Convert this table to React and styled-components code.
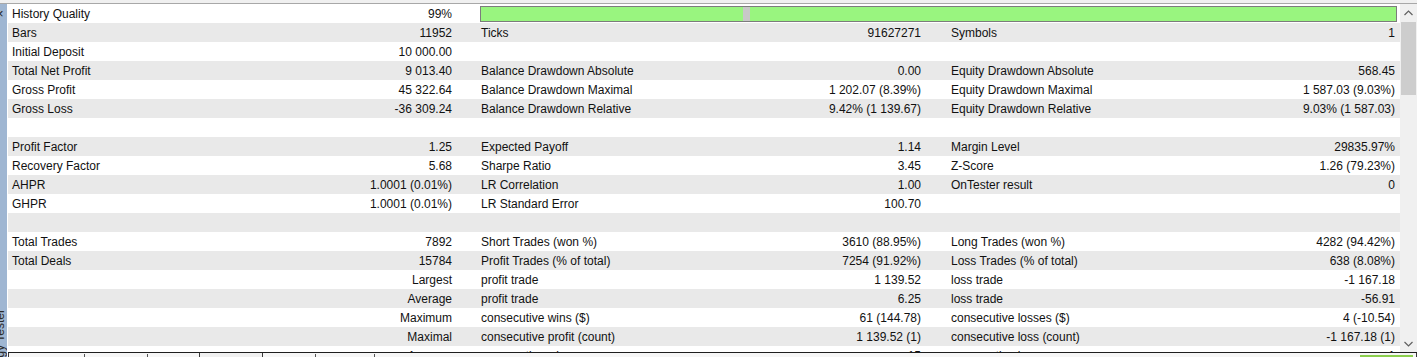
import styled, { createGlobalStyle } from "styled-components";

const GlobalStyle = createGlobalStyle`
  html, body {
    margin: 0;
    padding: 0;
    overflow: hidden;
    background: #f0f0f0;
  }

  body {
    font-family: "Liberation Sans", Arial, sans-serif;
    font-size: 12px;
    color: #111;
  }
`;

const rows = [
  { bar: true, cells: [["History Quality", "99%"]] },
  { cells: [["Bars", "11952"], ["Ticks", "91627271"], ["Symbols", "1"]] },
  { cells: [["Initial Deposit", "10 000.00"], ["", ""], ["", ""]] },
  {
    cells: [
      ["Total Net Profit", "9 013.40"],
      ["Balance Drawdown Absolute", "0.00"],
      ["Equity Drawdown Absolute", "568.45"],
    ],
  },
  {
    cells: [
      ["Gross Profit", "45 322.64"],
      ["Balance Drawdown Maximal", "1 202.07 (8.39%)"],
      ["Equity Drawdown Maximal", "1 587.03 (9.03%)"],
    ],
  },
  {
    cells: [
      ["Gross Loss", "-36 309.24"],
      ["Balance Drawdown Relative", "9.42% (1 139.67)"],
      ["Equity Drawdown Relative", "9.03% (1 587.03)"],
    ],
  },
  { cells: [["", ""], ["", ""], ["", ""]] },
  {
    cells: [
      ["Profit Factor", "1.25"],
      ["Expected Payoff", "1.14"],
      ["Margin Level", "29835.97%"],
    ],
  },
  {
    cells: [
      ["Recovery Factor", "5.68"],
      ["Sharpe Ratio", "3.45"],
      ["Z-Score", "1.26 (79.23%)"],
    ],
  },
  {
    cells: [
      ["AHPR", "1.0001 (0.01%)"],
      ["LR Correlation", "1.00"],
      ["OnTester result", "0"],
    ],
  },
  {
    cells: [
      ["GHPR", "1.0001 (0.01%)"],
      ["LR Standard Error", "100.70"],
      ["", ""],
    ],
  },
  { cells: [["", ""], ["", ""], ["", ""]] },
  {
    cells: [
      ["Total Trades", "7892"],
      ["Short Trades (won %)", "3610 (88.95%)"],
      ["Long Trades (won %)", "4282 (94.42%)"],
    ],
  },
  {
    cells: [
      ["Total Deals", "15784"],
      ["Profit Trades (% of total)", "7254 (91.92%)"],
      ["Loss Trades (% of total)", "638 (8.08%)"],
    ],
  },
  {
    cells: [
      ["", "Largest"],
      ["profit trade", "1 139.52"],
      ["loss trade", "-1 167.18"],
    ],
  },
  {
    cells: [
      ["", "Average"],
      ["profit trade", "6.25"],
      ["loss trade", "-56.91"],
    ],
  },
  {
    cells: [
      ["", "Maximum"],
      ["consecutive wins ($)", "61 (144.78)"],
      ["consecutive losses ($)", "4 (-10.54)"],
    ],
  },
  {
    cells: [
      ["", "Maximal"],
      ["consecutive profit (count)", "1 139.52 (1)"],
      ["consecutive loss (count)", "-1 167.18 (1)"],
    ],
  },
  {
    cells: [
      ["", "Average"],
      ["consecutive wins", "15"],
      ["consecutive losses", "1"],
    ],
  },
];

const groupPads = ["1px 20px 0 4px", "1px 21px 0 9px", "1px 5px 0 9px"];

export default function App() {
  return (
    <>
      <GlobalStyle />
      <Window>
        <TopLine />
        <Body>
          <Strip>
            <CloseGlyph>×</CloseGlyph>
            <StripLabel>Strategy Tester</StripLabel>
          </Strip>
          <Right>
            <Main>
              <Table>
                {rows.map((row, i) => (
                  <Row key={i} $alt={i % 2 === 1}>
                    {row.cells.map(([label, value], j) => (
                      <Cell key={j} $pad={groupPads[j]}>
                        <Label>{label}</Label>
                        <Value>{value}</Value>
                      </Cell>
                    ))}
                    {row.bar && (
                      <BarCell>
                        <Bar>
                          <Fill $w={262} />
                          <Notch />
                          <Fill />
                        </Bar>
                      </BarCell>
                    )}
                  </Row>
                ))}
              </Table>
              <Scrollbar>
                <ArrowButton>
                  <svg width="9" height="6" viewBox="0 0 9 6">
                    <polyline
                      points="0.5,5 4.5,1 8.5,5"
                      fill="none"
                      stroke="#606060"
                      strokeWidth="1.2"
                    />
                  </svg>
                </ArrowButton>
                <Thumb />
                <Track />
                <ArrowButton>
                  <svg width="9" height="6" viewBox="0 0 9 6">
                    <polyline
                      points="0.5,1 4.5,5 8.5,1"
                      fill="none"
                      stroke="#606060"
                      strokeWidth="1.2"
                    />
                  </svg>
                </ArrowButton>
              </Scrollbar>
            </Main>
            <BottomPanel>
              <TabBox $w={190}>
                <Tick $at={75} />
                <Tick $at={62} />
              </TabBox>
              <Gap />
              <TabBox $grow>
                <Tick $at={52} />
                <Tick $at={58} />
                <Spacer />
                <GreenButton />
              </TabBox>
            </BottomPanel>
          </Right>
        </Body>
      </Window>
    </>
  );
}

const Window = styled.div`
  width: 1417px;
  height: 357px;
  display: flex;
  flex-direction: column;
  overflow: hidden;
  background: #f0f0f0;
`;

const TopLine = styled.div`
  height: 3px;
  flex: none;
  background: #f0f0f0;
  border-bottom: 1px solid #a8a8a8;
`;

const Body = styled.div`
  flex: 1;
  display: flex;
  min-height: 0;
`;

const Strip = styled.div`
  width: 7px;
  flex: none;
  background: #9fb6d2;
  display: flex;
  flex-direction: column;
  justify-content: space-between;
  overflow: hidden;
  border-right: 1px solid #ffffff;
`;

const CloseGlyph = styled.div`
  margin: 3px 0 0 -4px;
  font-size: 13px;
  line-height: 14px;
  color: #222;
`;

const StripLabel = styled.div`
  writing-mode: vertical-rl;
  transform: rotate(180deg);
  white-space: nowrap;
  font-size: 12px;
  line-height: 12px;
  color: #2a2a2a;
  margin: 0 0 -32px -6px;
`;

const Right = styled.div`
  flex: 1;
  display: flex;
  flex-direction: column;
  min-width: 0;
`;

const Main = styled.div`
  height: 348px;
  flex: none;
  display: flex;
`;

const Table = styled.div`
  flex: 1;
  overflow: hidden;
  background: #ffffff;
`;

const Row = styled.div`
  display: grid;
  grid-template-columns: 464px 470px 1fr;
  height: 19px;
  background: ${(p) => (p.$alt ? "#e9e9e9" : "#ffffff")};
`;

const Cell = styled.div`
  display: flex;
  justify-content: space-between;
  padding: ${(p) => p.$pad};
  line-height: 18px;
  white-space: nowrap;
  min-width: 0;
`;

const Label = styled.span``;

const Value = styled.span`
  text-align: right;
`;

const BarCell = styled.div`
  grid-column: span 2;
  padding: 2px 3px 1px 8px;
`;

const Bar = styled.div`
  height: 14px;
  border: 1px solid #7c7c7c;
  display: flex;
  background: #99f57f;
`;

const Fill = styled.div`
  ${(p) => (p.$w ? `width: ${p.$w}px; flex: none;` : "flex: 1;")}
  background: #99f57f;
`;

const Notch = styled.div`
  width: 7px;
  flex: none;
  background: #c8c8c8;
`;

const Scrollbar = styled.div`
  width: 17px;
  flex: none;
  display: flex;
  flex-direction: column;
  background: #f0f0f0;
`;

const ArrowButton = styled.div`
  height: 17px;
  flex: none;
  display: flex;
  align-items: center;
  justify-content: center;
`;

const Thumb = styled.div`
  height: 73px;
  margin: 1px 1px 0 1px;
  flex: none;
  background: #cdcdcd;
`;

const Track = styled.div`
  flex: 1;
`;

const BottomPanel = styled.div`
  flex: 1;
  display: flex;
  background: #f0f0f0;
  border-top: 1px solid #1e1e1e;
`;

const TabBox = styled.div`
  ${(p) => (p.$grow ? "flex: 1;" : `width: ${p.$w}px; flex: none;`)}
  display: flex;
  border-left: 1px solid #3a3a3a;
  border-right: 1px solid #3a3a3a;
  background: #f6f6f6;
`;

const Gap = styled.div`
  width: 62px;
  flex: none;
  background: #f0f0f0;
`;

const Tick = styled.div`
  width: 1px;
  height: 3px;
  margin-left: ${(p) => p.$at}px;
  margin-top: 1px;
  background: #555;
`;

const Spacer = styled.div`
  flex: 1;
`;

const GreenButton = styled.div`
  width: 53px;
  margin: 2px 3px 0 0;
  background: #8ccf4d;
`;
